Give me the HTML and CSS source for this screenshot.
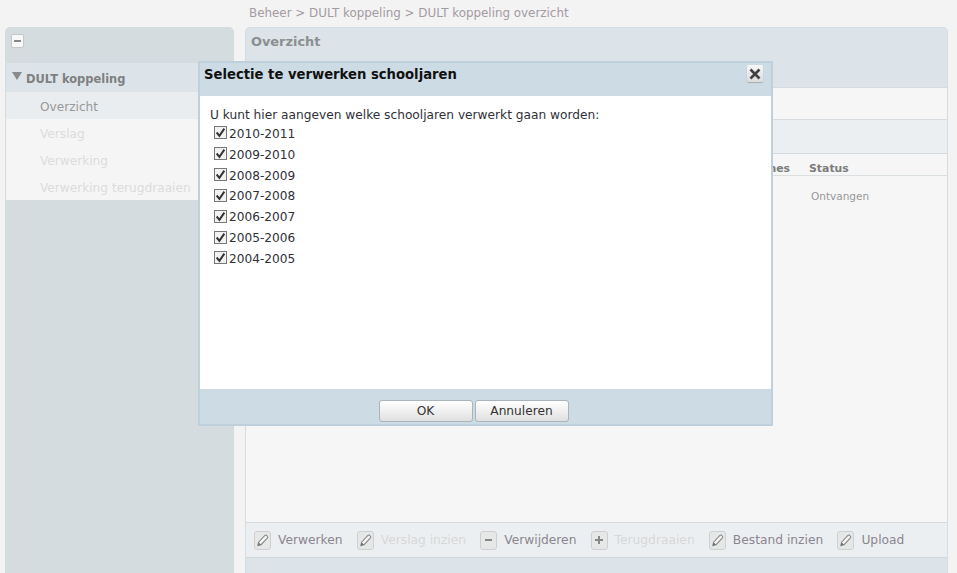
FILE: index.html
```html
<!DOCTYPE html>
<html lang="nl">
<head>
<meta charset="utf-8">
<title>DULT koppeling overzicht</title>
<link rel="stylesheet" href="styles.css">
</head>
<body>
<svg class="defs" width="0" height="0" aria-hidden="true">
  <defs>
    <symbol id="pencil" viewBox="0 0 16 16">
      <path d="M3 13.4 3.8 9.8 10.6 2.6 C11.2 2 12 2.1 12.9 3 C13.7 3.8 13.9 4.7 13.3 5.3 L6.5 12.5 Z" fill="#f4f4f4" stroke="#858585" stroke-width="1.1"/>
      <path d="M3 13.4 3.8 9.8 6.5 12.5 Z" fill="#6f6f6f"/>
    </symbol>
  </defs>
</svg>
<div class="crumbs">Beheer &gt; DULT koppeling &gt; DULT koppeling overzicht</div>
<div class="columns">
  <aside class="side">
    <div class="side-head"><span class="mini-btn"><span class="minus-mark"></span></span></div>
    <div class="tree-head"><span class="triangle"></span>DULT koppeling</div>
    <ul class="tree">
      <li class="tree-item active">Overzicht</li>
      <li class="tree-item">Verslag</li>
      <li class="tree-item">Verwerking</li>
      <li class="tree-item">Verwerking terugdraaien</li>
    </ul>
  </aside>
  <main class="panel">
    <div class="panel-head">Overzicht</div>
    <div class="panel-inner">
      <div class="bar-tool"></div>
      <div class="bar-band"></div>
      <div class="table-head"><span class="col-a">nes</span><span class="col-b">Status</span></div>
      <div class="table-row"><span class="col-status">Ontvangen</span></div>
      <div class="table-fill"></div>
      <div class="actions">
        <span class="act"><span class="act-btn"><svg class="pencil"><use href="#pencil"/></svg></span>Verwerken</span>
        <span class="act off"><span class="act-btn"><svg class="pencil"><use href="#pencil"/></svg></span>Verslag inzien</span>
        <span class="act"><span class="act-btn"><span class="minus-mark"></span></span>Verwijderen</span>
        <span class="act off"><span class="act-btn"><span class="plus-mark"></span></span>Terugdraaien</span>
        <span class="act"><span class="act-btn"><svg class="pencil"><use href="#pencil"/></svg></span>Bestand inzien</span>
        <span class="act"><span class="act-btn"><svg class="pencil"><use href="#pencil"/></svg></span>Upload</span>
      </div>
    </div>
  </main>
</div>
<section class="dialog">
  <header class="dialog-head">
    <h1 class="dialog-title">Selectie te verwerken schooljaren</h1>
    <span class="close"><svg width="12" height="12" viewBox="0 0 12 12"><path d="M1.5 1.5 10.5 10.5M10.5 1.5 1.5 10.5" stroke="#404040" stroke-width="2.6" fill="none"/></svg></span>
  </header>
  <div class="dialog-body">
    <p class="intro">U kunt hier aangeven welke schooljaren verwerkt gaan worden:</p>
    <div class="year"><span class="check"><svg width="11" height="11" viewBox="0 0 10 10"><path d="M1.5 5 4 8 8.5 1.5" stroke="#333" stroke-width="1.8" fill="none"/></svg></span>2010-2011</div>
    <div class="year"><span class="check"><svg width="11" height="11" viewBox="0 0 10 10"><path d="M1.5 5 4 8 8.5 1.5" stroke="#333" stroke-width="1.8" fill="none"/></svg></span>2009-2010</div>
    <div class="year"><span class="check"><svg width="11" height="11" viewBox="0 0 10 10"><path d="M1.5 5 4 8 8.5 1.5" stroke="#333" stroke-width="1.8" fill="none"/></svg></span>2008-2009</div>
    <div class="year"><span class="check"><svg width="11" height="11" viewBox="0 0 10 10"><path d="M1.5 5 4 8 8.5 1.5" stroke="#333" stroke-width="1.8" fill="none"/></svg></span>2007-2008</div>
    <div class="year"><span class="check"><svg width="11" height="11" viewBox="0 0 10 10"><path d="M1.5 5 4 8 8.5 1.5" stroke="#333" stroke-width="1.8" fill="none"/></svg></span>2006-2007</div>
    <div class="year"><span class="check"><svg width="11" height="11" viewBox="0 0 10 10"><path d="M1.5 5 4 8 8.5 1.5" stroke="#333" stroke-width="1.8" fill="none"/></svg></span>2005-2006</div>
    <div class="year"><span class="check"><svg width="11" height="11" viewBox="0 0 10 10"><path d="M1.5 5 4 8 8.5 1.5" stroke="#333" stroke-width="1.8" fill="none"/></svg></span>2004-2005</div>
  </div>
  <footer class="dialog-foot">
    <button class="btn btn-ok" type="button">OK</button>
    <button class="btn btn-cancel" type="button">Annuleren</button>
  </footer>
</section>
</body>
</html>
```
FILE: styles.css
```css
* { box-sizing: border-box; }
html, body { margin: 0; height: 573px; overflow: hidden; }
body {
  position: relative;
  background: #f3f3f3;
  font-family: "DejaVu Sans", Verdana, sans-serif;
  font-size: 12.15px;
  color: #8a8a8a;
}
.defs { position: absolute; }
.crumbs { height: 27px; padding: 6px 0 0 249px; color: #a39aa3; line-height: 15px; font-size: 11.9px; }
.columns { display: flex; height: 546px; padding-left: 5px; gap: 11px; }

.side { width: 229px; background: #d4dcdf; border-radius: 5px 5px 0 0; padding: 1px 0 0 1px; }
.side-head { height: 35px; padding: 6px 0 0 5px; }
.mini-btn {
  display: flex; align-items: center; justify-content: center;
  width: 13px; height: 14px;
  background: #f8f8f8; border: 1px solid #c4c8ca; border-radius: 2px;
}
.minus-mark { display: block; width: 7px; height: 2px; background: #888; }
.plus-mark {
  display: block; width: 8px; height: 8px;
  background: linear-gradient(#888,#888) center/8px 2px no-repeat, linear-gradient(#888,#888) center/2px 8px no-repeat;
}
.tree-head {
  height: 29px; background: #dce4ea; padding-left: 6px;
  display: flex; align-items: center; gap: 4px;
  font-weight: bold; font-size: 11.45px; color: #7f7f80; padding-top: 3px;
}
.triangle { width: 0; height: 0; border: 5px solid transparent; border-top: 8px solid #8a8a8a; border-bottom: 0; margin-top: -6px; }
.tree { list-style: none; margin: 0; padding: 0; background: #f5f5f5; }
.tree-item { height: 27px; line-height: 30px; padding-left: 34px; color: #dcdcdc; white-space: nowrap; }
.tree-item.active { background: #e9edef; color: #999; }

.panel {
  width: 703px; background: #dce4ea; border-radius: 5px 5px 0 0;
  border: 1px solid #d5dde2; border-bottom: 0;
  display: flex; flex-direction: column;
}
.panel-head { height: 59px; padding: 6px 0 0 5px; font-size: 12.9px; font-weight: bold; color: #8b8f8f; line-height: 16px; flex: none; }
.panel-inner { height: 471px; flex: none; display: flex; flex-direction: column; background: #f6f6f6; border-top: 1px solid #d5dbe0; }
.bar-tool { height: 32px; border-bottom: 1px solid #d5dbde; flex: none; }
.bar-band { height: 34px; background: #eceff1; border-bottom: 1px solid #d5dbde; flex: none; }
.table-head {
  height: 22px; flex: none; border-top: 1px solid #f6f6f6; border-bottom: 1px solid #d9dee1;
  display: flex; font-weight: bold; font-size: 10.9px; color: #7c7c7c; line-height: 22px; padding-top: 3px;
}
.col-a { width: 544px; text-align: right; }
.col-b { margin-left: 19px; }
.table-row { height: 39px; flex: none; padding: 12px 0 0 565px; font-size: 10.5px; line-height: 16px; color: #989898; }
.table-fill { flex: 1; }
.actions {
  height: 36px; flex: none; display: flex; align-items: center; padding: 0 0 0 8px;
  background: #eceff1; border-top: 1px solid #d5dbde; border-bottom: 1px solid #d0d7db;
  color: #8b8590; white-space: nowrap; font-size: 12.25px;
}
.act { display: flex; align-items: center; gap: 7px; margin-right: 14.2px; }
.act.off { color: #d8d8d8; }
.act-btn {
  display: flex; align-items: center; justify-content: center;
  width: 17px; height: 19px; background: #e6e8e8;
  border: 1px solid #cfcfcf; border-radius: 3px;
}
.pencil { width: 15px; height: 15px; flex: none; }

.dialog {
  position: absolute; left: 198px; top: 61px; width: 575px; height: 365px;
  background: #cddbe5; border: 2px solid #bfd0dc;
  display: flex; flex-direction: column;
}
.dialog-head { height: 33px; flex: none; position: relative; padding: 3px 0 0 4px; }
.dialog-title { margin: 0; font-size: 13.2px; font-weight: bold; color: #111; line-height: 18px; }
.close {
  position: absolute; right: 8px; top: 2px; width: 16px; height: 17px;
  display: flex; align-items: center; justify-content: center;
  background: linear-gradient(#f7f7f7, #dcdcdc); border-radius: 2px; box-shadow: 0 1px 1px #aaa;
}
.dialog-body { height: 293px; flex: none; background: #fff; padding: 12px 0 0 10px; color: #303038; }
.intro { margin: 0 0 0.5px; line-height: 15px; font-size: 12.2px; }
.year { display: flex; align-items: center; height: 20.83px; padding-left: 4px; font-size: 12.15px; }
.check {
  display: flex; align-items: center; justify-content: center;
  width: 13px; height: 13px; margin-right: 2px; margin-top: -2px;
  background: #f2f2f2; border: 1px solid #777;
}
.dialog-foot { flex: 1; display: flex; justify-content: center; align-items: flex-start; gap: 2px; padding: 11px 24px 0 0; }
.btn {
  width: 94px; height: 22px; padding: 0;
  font: 12.2px "DejaVu Sans", Verdana, sans-serif; color: #333;
  background: linear-gradient(#fff, #e0e0e0); border: 1px solid #a9b4bb; border-radius: 3px;
}
```
